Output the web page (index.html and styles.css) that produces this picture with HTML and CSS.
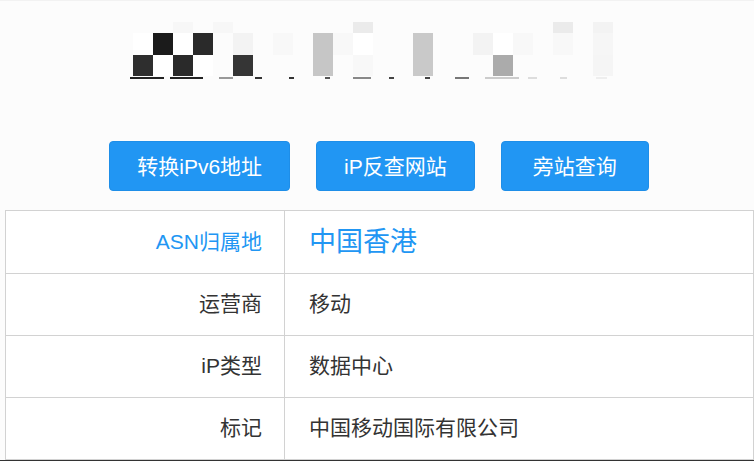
FILE: index.html
```html
<!doctype html>
<html lang="zh-CN">
<head>
  <meta charset="UTF-8">
  <meta name="viewport" content="width=device-width, initial-scale=1.0">
  <title>IP查询</title>
  <link rel="stylesheet" href="styles.css">
</head>
<body>
  <div class="header">
    <!-- pixelated ip address -->
    <svg class="mosaic" width="484" height="60" viewBox="0 0 484 60">
      <rect x="43" y="0" width="20" height="11" fill="#f7f7f7"/>
      <rect x="83" y="0" width="20" height="11" fill="#f7f7f7"/>
      <rect x="223" y="0" width="20" height="11" fill="#ebebeb"/>
      <rect x="423" y="0" width="20" height="11" fill="#ebebeb"/>
      <rect x="463" y="0" width="20" height="11" fill="#f3f3f3"/>

      <rect x="3" y="11" width="20" height="22" fill="#fff"/>
      <rect x="23" y="11" width="20" height="22" fill="#1b1b1b"/>
      <rect x="43" y="11" width="20" height="22" fill="#fff"/>
      <rect x="63" y="11" width="20" height="22" fill="#2a2a2a"/>
      <rect x="103" y="11" width="20" height="22" fill="#f3f3f3"/>
      <rect x="143" y="11" width="20" height="22" fill="#f8f8f8"/>
      <rect x="183" y="11" width="20" height="22" fill="#c6c6c6"/>
      <rect x="203" y="11" width="20" height="22" fill="#f8f8f8"/>
      <rect x="223" y="11" width="20" height="22" fill="#fff"/>
      <rect x="283" y="11" width="20" height="22" fill="#c9c9c9"/>
      <rect x="343" y="11" width="20" height="22" fill="#f3f3f3"/>
      <rect x="363" y="11" width="20" height="22" fill="#fff"/>
      <rect x="383" y="11" width="20" height="22" fill="#f8f8f8"/>
      <rect x="423" y="11" width="20" height="22" fill="#f8f8f8"/>
      <rect x="463" y="11" width="20" height="22" fill="#f6f6f6"/>

      <rect x="3" y="33" width="20" height="21" fill="#2e2e2e"/>
      <rect x="23" y="33" width="20" height="21" fill="#fff"/>
      <rect x="43" y="33" width="20" height="21" fill="#2a2a2a"/>
      <rect x="63" y="33" width="20" height="21" fill="#fff"/>
      <rect x="103" y="33" width="20" height="21" fill="#353535"/>
      <rect x="183" y="33" width="20" height="21" fill="#c6c6c6"/>
      <rect x="223" y="33" width="20" height="21" fill="#f8f8f8"/>
      <rect x="283" y="33" width="20" height="21" fill="#c9c9c9"/>
      <rect x="363" y="33" width="20" height="21" fill="#ababab"/>
      <rect x="463" y="33" width="20" height="21" fill="#f5f5f5"/>

      <rect x="0" y="55" width="34" height="2" fill="#222"/>
      <rect x="40" y="55" width="33" height="2" fill="#222"/>
      <rect x="89" y="55" width="14" height="2" fill="#999"/>
      <rect x="125" y="55" width="7" height="2" fill="#333"/>
      <rect x="159" y="55" width="5" height="2" fill="#333"/>
      <rect x="195" y="55" width="5" height="2" fill="#555"/>
      <rect x="223" y="55" width="18" height="2" fill="#888"/>
      <rect x="259" y="55" width="5" height="2" fill="#444"/>
      <rect x="295" y="55" width="5" height="2" fill="#444"/>
      <rect x="325" y="55" width="14" height="2" fill="#777"/>
      <rect x="355" y="55" width="34" height="2" fill="#ccc"/>
      <rect x="398" y="55" width="9" height="2" fill="#ddd"/>
      <rect x="430" y="55" width="7" height="2" fill="#ddd"/>
      <rect x="466" y="55" width="11" height="2" fill="#eee"/>
    </svg>
  </div>

  <div class="actions">
    <a class="btn" href="#">转换iPv6地址</a>
    <a class="btn" href="#">iP反查网站</a>
    <a class="btn" href="#">旁站查询</a>
  </div>

  <table class="info">
    <tr class="first">
      <td class="label blue">ASN归属地</td>
      <td class="value big">中国香港</td>
    </tr>
    <tr>
      <td class="label">运营商</td>
      <td class="value">移动</td>
    </tr>
    <tr>
      <td class="label">iP类型</td>
      <td class="value">数据中心</td>
    </tr>
    <tr>
      <td class="label">标记</td>
      <td class="value">中国移动国际有限公司</td>
    </tr>
  </table>
  <div class="bottom"></div>
</body>
</html>
```

FILE: styles.css
```css
html, body {
    margin: 0;
    padding: 0;
}
body {
    background: #fcfcfc;
    font-family: "Helvetica Neue", "Liberation Sans", "Noto Sans CJK SC", sans-serif;
    color: #333;
    overflow: hidden;
}
.header {
    border-top: 1px solid #f2f2f2;
    padding-top: 21px;
    display: flex;
    justify-content: center;
}
.mosaic {
    display: block;
    margin-left: -11px;
}
.actions {
    display: flex;
    justify-content: center;
    gap: 26px;
    margin-top: 59px;
    padding-left: 4px;
}
.btn {
    display: flex;
    align-items: center;
    justify-content: center;
    box-sizing: border-box;
    height: 50px;
    min-width: 148px;
    padding: 0 27px 2px;
    background: #2196f3;
    border: 1px solid #1e8ee8;
    border-radius: 4px;
    color: #fff;
    font-size: 21px;
    text-decoration: none;
}
.info {
    margin: 19px 0 0 5px;
    width: 749px;
    border-collapse: collapse;
    background: #fff;
    font-size: 21px;
}
.info td {
    border: 1px solid #d2d2d2;
    height: 56px;
    padding: 0 0 5px;
}
.info tr.first td {
    height: 57px;
}
.label {
    width: 256px;
    text-align: right;
    padding-right: 22px !important;
}
.value {
    padding-left: 24px !important;
}
.blue {
    color: #2196f3;
}
.big {
    font-size: 27px;
    color: #2196f3;
}
.bottom {
    height: 10px;
    background: #333;
}
```
